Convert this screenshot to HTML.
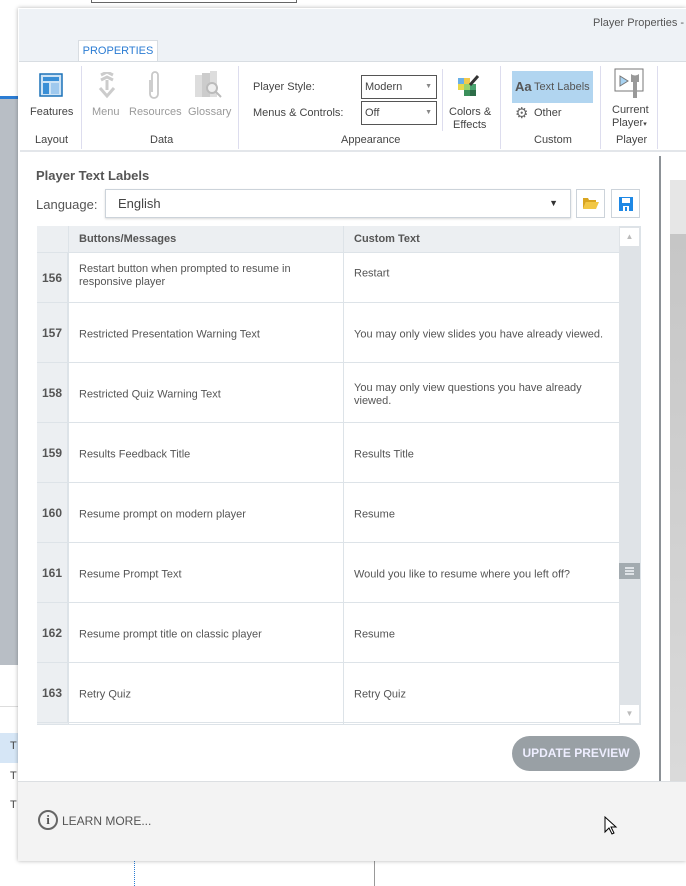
<!DOCTYPE html>
<html><head><meta charset="utf-8"><style>
*{margin:0;padding:0;box-sizing:border-box}
body{width:686px;height:886px;overflow:hidden;background:#fff;font-family:"Liberation Sans",sans-serif;position:relative;color:#444}
.a{position:absolute}
.t{font-size:11px;color:#444;white-space:nowrap}
.g{color:#9a9a9a}
.row{position:absolute;left:37px;width:582px;border-bottom:1px solid #dde3e8}
.num{position:absolute;left:0;top:0;bottom:0;width:31px;background:#eceff2;border-right:1px solid #dde3e8;font-weight:bold;font-size:12px;color:#555;display:flex;align-items:center;justify-content:center}
.c1{position:absolute;left:42px;width:250px;font-size:11px;color:#555;line-height:13px;top:calc(50% + 2px);transform:translateY(-50%)}
.c2{position:absolute;left:317px;width:260px;font-size:11px;color:#555;line-height:13px;top:calc(50% + 2px);transform:translateY(-50%)}
.vl{position:absolute;left:306px;top:0;bottom:0;border-left:1px solid #dde3e8}
</style></head><body>
<div class="a" style="left:0;top:0;width:18px;height:98px;background:#fff"></div>
<div class="a" style="left:0;top:96px;width:18px;height:3px;background:#2b7cd3"></div>
<div class="a" style="left:0;top:99px;width:18px;height:566px;background:#b8bec5"></div>
<div class="a" style="left:0;top:706px;width:18px;height:1px;background:#ddd"></div>
<div class="a" style="left:0;top:733px;width:18px;height:30px;background:#d6e6f6"></div>
<div class="t a" style="left:10px;top:740px">T</div>
<div class="t a" style="left:10px;top:770px">T</div>
<div class="t a" style="left:10px;top:799px">T</div>
<div class="a" style="left:91px;top:0;width:206px;height:3px;border:1px solid #666;border-top:none"></div>
<div class="a" style="left:134px;top:860px;height:26px;border-left:1px dotted #2b7cd3"></div>
<div class="a" style="left:374px;top:860px;height:26px;border-left:1px solid #999"></div>
<div class="a" style="left:18px;top:8px;width:668px;height:853px;background:#fff;box-shadow:0 0 4px rgba(0,0,0,.3)"></div>
<div class="a" style="left:19px;top:9px;width:667px;height:53px;background:#eef2f6"></div>
<div class="t a" style="left:593px;top:17px;font-size:11px;color:#555">Player Properties -</div>
<div class="a" style="left:78px;top:40px;width:80px;height:22px;background:#fff;border:1px solid #d8dde2;border-bottom:none;color:#2b7cd3;font-size:11px;text-align:center;line-height:20px">PROPERTIES</div>
<div class="a" style="left:19px;top:61px;width:667px;height:1px;background:#d8dde2"></div>
<div class="a" style="left:20px;top:150px;width:666px;height:2px;background:#e3e6ea"></div>
<svg class="a" style="left:39px;top:73px" width="25" height="25"><rect x="1" y="1" width="22" height="22" fill="#cde3f5" stroke="#1c72b8" stroke-width="1.5"/><rect x="4" y="4" width="16" height="4" fill="#3a8fd6"/><rect x="4" y="10" width="6" height="11" fill="#3a8fd6"/><rect x="12" y="10" width="8" height="11" fill="#9fc9ee"/></svg>
<div class="t a" style="left:30px;top:106px">Features</div>
<div class="t a" style="left:35px;top:134px">Layout</div>
<div class="a" style="left:81px;top:66px;height:83px;border-left:1px solid #dde"></div>
<svg class="a" style="left:96px;top:72px" width="22" height="28"><path d="M5 3l6-3 6 3M5 8l6-3 6 3M11 8v10M4 16l7 8 7-8" stroke="#ccc" stroke-width="3" fill="none"/></svg>
<svg class="a" style="left:146px;top:70px" width="16" height="32"><path d="M4 10v14a4 4 0 0 0 8 0V5a3 3 0 0 0-6 0v17" stroke="#c8c8c8" stroke-width="1.8" fill="none"/></svg>
<svg class="a" style="left:194px;top:70px" width="30" height="32"><rect x="1" y="5" width="7" height="22" fill="#ddd"/><rect x="8" y="3" width="8" height="24" fill="#ccc"/><rect x="16" y="1" width="7" height="26" fill="#ddd"/><circle cx="18" cy="18" r="5" fill="#eee" stroke="#bbb" stroke-width="2"/><path d="M22 22l5 5" stroke="#bbb" stroke-width="2"/></svg>
<div class="t a g" style="left:92px;top:106px">Menu</div>
<div class="t a g" style="left:129px;top:106px">Resources</div>
<div class="t a g" style="left:188px;top:106px">Glossary</div>
<div class="t a" style="left:150px;top:134px">Data</div>
<div class="a" style="left:238px;top:66px;height:83px;border-left:1px solid #dde"></div>
<div class="t a" style="left:253px;top:81px">Player Style:</div>
<div class="t a" style="left:253px;top:107px">Menus &amp; Controls:</div>
<div class="a" style="left:361px;top:75px;width:76px;height:24px;border:1px solid #555;font-size:11px;line-height:22px;padding-left:3px">Modern<span style="position:absolute;right:4px;font-size:7px;color:#888">▼</span></div>
<div class="a" style="left:361px;top:101px;width:76px;height:24px;border:1px solid #555;font-size:11px;line-height:22px;padding-left:3px">Off<span style="position:absolute;right:4px;font-size:7px;color:#888">▼</span></div>
<div class="a" style="left:442px;top:69px;height:62px;border-left:1px solid #dde"></div>
<svg class="a" style="left:457px;top:74px" width="24" height="24"><rect x="1" y="4" width="6" height="6" fill="#6ab0e6"/><rect x="7" y="4" width="6" height="6" fill="#f2c94c"/><rect x="1" y="10" width="6" height="6" fill="#e8d84a"/><rect x="7" y="10" width="6" height="6" fill="#9ad36a"/><rect x="13" y="10" width="6" height="6" fill="#4aa370"/><rect x="7" y="16" width="6" height="6" fill="#3b8f5a"/><rect x="13" y="16" width="6" height="6" fill="#2d6d48"/><path d="M13 11L21 2" stroke="#333" stroke-width="3"/></svg>
<div class="t a" style="left:449px;top:106px">Colors &amp;</div>
<div class="t a" style="left:453px;top:119px">Effects</div>
<div class="t a" style="left:341px;top:134px">Appearance</div>
<div class="a" style="left:500px;top:66px;height:83px;border-left:1px solid #dde"></div>
<div class="a" style="left:512px;top:71px;width:81px;height:32px;background:#b1d5f0"></div>
<div class="a" style="left:515px;top:79px;font-size:13px;font-weight:bold;color:#555">Aa</div>
<div class="t a" style="left:534px;top:81px;color:#555">Text Labels</div>
<div class="a" style="left:515px;top:104px;font-size:15px;color:#666">⚙</div>
<div class="t a" style="left:534px;top:107px">Other</div>
<div class="t a" style="left:534px;top:134px">Custom</div>
<div class="a" style="left:600px;top:66px;height:83px;border-left:1px solid #dde"></div>
<svg class="a" style="left:614px;top:68px" width="32" height="34"><rect x="1" y="1" width="28" height="22" fill="#fff" stroke="#777"/><path d="M6 8l8 5-8 5z" fill="#a8d3f2" stroke="#777"/><path d="M17 6a6 6 0 0 0 8 0v8h-2v16h-4V14h-2z" fill="#999"/></svg>
<div class="t a" style="left:612px;top:104px">Current</div>
<div class="t a" style="left:612px;top:117px">Player<span style="font-size:7px">▾</span></div>
<div class="t a" style="left:616px;top:134px">Player</div>
<div class="a" style="left:657px;top:66px;height:83px;border-left:1px solid #dde"></div>
<div class="a" style="left:659px;top:156px;width:2px;height:626px;background:#8c9196"></div>
<div class="a" style="left:670px;top:180px;width:16px;height:54px;background:#e6e6e6"></div>
<div class="a" style="left:670px;top:234px;width:16px;height:548px;background:linear-gradient(#c6c6c6,#dadada)"></div>
<div class="a" style="left:36px;top:168px;font-size:13px;font-weight:bold;color:#555">Player Text Labels</div>
<div class="a" style="left:36px;top:197px;font-size:13px;color:#555">Language:</div>
<div class="a" style="left:105px;top:189px;width:466px;height:29px;border:1px solid #ccd3da;box-shadow:0 1px 2px rgba(0,0,0,.15);font-size:13px;line-height:27px;padding-left:12px;color:#444">English<span style="position:absolute;right:12px;font-size:9px;color:#333">▼</span></div>
<div class="a" style="left:576px;top:189px;width:29px;height:29px;border:1px solid #ccd3da"></div>
<svg class="a" style="left:582px;top:196px" width="18" height="14"><path d="M1 2h5l1 2h7v2H4L1 13z" fill="#d9a520"/><path d="M4 6h13l-3 7H1z" fill="#f2c744"/></svg>
<div class="a" style="left:611px;top:189px;width:29px;height:29px;border:1px solid #ccd3da"></div>
<svg class="a" style="left:618px;top:196px" width="16" height="16"><path d="M1 1h14v14H1z" fill="#1e88e5"/><rect x="4" y="2" width="8" height="5" fill="#fff"/><rect x="5" y="10" width="6" height="5" fill="#fff"/><rect x="7" y="11" width="2" height="4" fill="#1e88e5"/></svg>
<div class="a" style="left:37px;top:226px;width:604px;height:499px;border:1px solid #dde3e8;background:#fff;overflow:hidden"></div>
<div class="a" style="left:37px;top:226px;width:582px;height:27px;background:#eceff2;border-bottom:1px solid #dde3e8"></div>
<div class="a" style="left:68px;top:226px;height:498px;border-left:1px solid #dde3e8"></div>
<div class="a" style="left:343px;top:226px;height:498px;border-left:1px solid #dde3e8"></div>
<div class="a" style="left:79px;top:233px;font-size:11px;font-weight:bold;color:#555">Buttons/Messages</div>
<div class="a" style="left:354px;top:233px;font-size:11px;font-weight:bold;color:#555">Custom Text</div>
<div class="row" style="top:253px;height:50px"><div class="num">156</div><div class="vl"></div><div class="c1" style="top:calc(50% - 2px)">Restart button when prompted to resume in responsive player</div><div class="c2" style="top:calc(50% - 4px)">Restart</div></div>
<div class="row" style="top:303px;height:60px"><div class="num">157</div><div class="vl"></div><div class="c1">Restricted Presentation Warning Text</div><div class="c2">You may only view slides you have already viewed.</div></div>
<div class="row" style="top:363px;height:60px"><div class="num">158</div><div class="vl"></div><div class="c1">Restricted Quiz Warning Text</div><div class="c2">You may only view questions you have already viewed.</div></div>
<div class="row" style="top:423px;height:60px"><div class="num">159</div><div class="vl"></div><div class="c1">Results Feedback Title</div><div class="c2">Results Title</div></div>
<div class="row" style="top:483px;height:60px"><div class="num">160</div><div class="vl"></div><div class="c1">Resume prompt on modern player</div><div class="c2">Resume</div></div>
<div class="row" style="top:543px;height:60px"><div class="num">161</div><div class="vl"></div><div class="c1">Resume Prompt Text</div><div class="c2">Would you like to resume where you left off?</div></div>
<div class="row" style="top:603px;height:60px"><div class="num">162</div><div class="vl"></div><div class="c1">Resume prompt title on classic player</div><div class="c2">Resume</div></div>
<div class="row" style="top:663px;height:60px"><div class="num">163</div><div class="vl"></div><div class="c1">Retry Quiz</div><div class="c2">Retry Quiz</div></div>
<div class="a" style="left:37px;top:723px;width:31px;height:1px;background:#eceff2"></div>
<div class="a" style="left:619px;top:227px;width:21px;height:497px;background:#dfe3e7"></div>
<div class="a" style="left:620px;top:228px;width:19px;height:18px;background:#fff;font-size:8px;color:#bbb;text-align:center;line-height:18px">▲</div>
<div class="a" style="left:620px;top:705px;width:19px;height:18px;background:#fff;font-size:8px;color:#bbb;text-align:center;line-height:18px">▼</div>
<div class="a" style="left:619px;top:563px;width:21px;height:16px;background:#a3abb0"></div>
<div class="a" style="left:625px;top:567px;width:9px;height:8px;border-top:2px solid #dfe3e7;border-bottom:2px solid #dfe3e7"></div>
<div class="a" style="left:625px;top:570px;width:9px;height:2px;background:#dfe3e7"></div>
<div class="a" style="left:512px;top:736px;width:128px;height:35px;border-radius:18px;background:#99a0a5;color:#eef;font-size:12px;font-weight:bold;text-align:center;line-height:35px">UPDATE PREVIEW</div>
<div class="a" style="left:18px;top:781px;width:668px;height:80px;background:#f3f3f3;border-top:1px solid #dcdfe2"></div>
<div class="a" style="left:38px;top:810px;width:20px;height:20px;border:2px solid #666;border-radius:50%;font-size:13px;font-family:'Liberation Serif',serif;font-weight:bold;color:#555;text-align:center;line-height:16px">i</div>
<div class="a" style="left:62px;top:814px;font-size:12px;color:#555">LEARN MORE...</div>
<svg class="a" style="left:604px;top:816px" width="14" height="20"><path d="M1 1v15l4-4 3 6 2-1-3-6h5z" fill="#fff" stroke="#000"/></svg>
</body></html>
